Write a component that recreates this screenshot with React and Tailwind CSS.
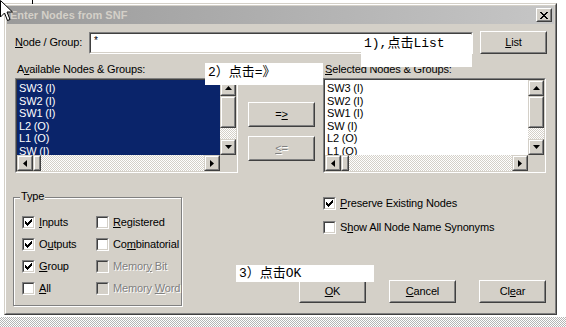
import React from "react";

const SO = "border border-t-[#808080] border-l-[#808080] border-b-white border-r-white";
const SI = "border border-t-[#404040] border-l-[#404040] border-b-[#d4d0c8] border-r-[#d4d0c8]";
const RO = "border border-t-white border-l-white border-b-[#404040] border-r-[#404040]";
const RI = "border border-t-[#d4d0c8] border-l-[#d4d0c8] border-b-[#808080] border-r-[#808080]";
const SBO = "border border-t-[#d4d0c8] border-l-[#d4d0c8] border-b-[#404040] border-r-[#404040]";
const SBI = "border border-t-white border-l-white border-b-[#808080] border-r-[#808080]";
const DITHER =
  "bg-[repeating-conic-gradient(#ffffff_0_25%,#d4d0c8_0_50%)] bg-[length:2px_2px]";
const DIS = "text-[#808080] [text-shadow:1px_1px_0_#ffffff]";

function U({ children }) {
  return <span className="underline underline-offset-[1px]">{children}</span>;
}

function Button({ className = "", children, disabled }) {
  return (
    <div className={`${RO} bg-[#d4d0c8] ${className}`}>
      <div className={`${RI} w-full h-full flex items-center justify-center ${disabled ? DIS : ""}`}>
        {children}
      </div>
    </div>
  );
}

function Tri({ dir }) {
  const pts = {
    up: "3.5,0 7,4 0,4",
    down: "0,0 7,0 3.5,4",
    left: "4,0 4,7 0,3.5",
    right: "0,0 4,3.5 0,7",
  }[dir];
  const v = dir === "up" || dir === "down";
  return (
    <svg width={v ? 7 : 4} height={v ? 4 : 7} viewBox={v ? "0 0 7 4" : "0 0 4 7"}>
      <polygon points={pts} fill="#000" />
    </svg>
  );
}

function SBtn({ dir, className = "" }) {
  return (
    <div className={`${SBO} bg-[#d4d0c8] w-[16px] h-[16px] shrink-0 ${className}`}>
      <div className={`${SBI} w-full h-full flex items-center justify-center`}>
        {dir ? <Tri dir={dir} /> : null}
      </div>
    </div>
  );
}

function VScroll() {
  return (
    <div className="w-[16px] flex flex-col shrink-0">
      <SBtn dir="up" />
      <div className={`${SBO} bg-[#d4d0c8] w-[16px] h-[32px]`}>
        <div className={`${SBI} w-full h-full`} />
      </div>
      <div className={`flex-1 ${DITHER}`} />
      <SBtn dir="down" />
    </div>
  );
}

function HScroll() {
  return (
    <div className="flex flex-1 h-[16px]">
      <SBtn dir="left" />
      <div className={`${SBO} bg-[#d4d0c8] w-[8px] h-[16px]`}>
        <div className={`${SBI} w-full h-full`} />
      </div>
      <div className={`flex-1 ${DITHER}`} />
      <SBtn dir="right" />
    </div>
  );
}

function ListBox({ items, selected }) {
  return (
    <div className={`${SO} w-[223px] h-[95px]`}>
      <div className={`${SI} w-full h-full flex flex-col`}>
        <div className="flex flex-1 min-h-0">
          <div
            className={`flex-1 overflow-hidden pl-[2px] pt-[2px] ${
              selected ? "bg-[#0a246a] text-white" : "bg-white text-black"
            }`}
          >
            {items.map((t) => (
              <div key={t} className="h-[12.5px] leading-[12.5px] whitespace-nowrap">
                {t}
              </div>
            ))}
          </div>
          <VScroll />
        </div>
        <div className="flex h-[16px]">
          <HScroll />
          <div className="w-[16px] bg-[#d4d0c8]" />
        </div>
      </div>
    </div>
  );
}

function Check({ on, disabled }) {
  const px = [
    [6, 0], [5, 1], [6, 1], [0, 2], [4, 2], [5, 2], [6, 2],
    [0, 3], [1, 3], [3, 3], [4, 3], [5, 3],
    [0, 4], [1, 4], [2, 4], [3, 4], [4, 4],
    [1, 5], [2, 5], [3, 5], [2, 6],
  ];
  return (
    <div className={`${SO} w-[13px] h-[13px] shrink-0`}>
      <div
        className={`${SI} w-full h-full flex items-center justify-center ${
          disabled ? "bg-[#d4d0c8]" : "bg-white"
        }`}
      >
        {on ? (
          <svg width="7" height="7" viewBox="0 0 7 7" shapeRendering="crispEdges">
            {px.map(([x, y]) => (
              <rect key={`${x}-${y}`} x={x} y={y} width="1" height="1" fill="#000" />
            ))}
          </svg>
        ) : null}
      </div>
    </div>
  );
}

function CheckRow({ on, disabled, children, className = "" }) {
  return (
    <div className={`flex items-center ${className}`}>
      <Check on={on} disabled={disabled} />
      <span className={`ml-[4px] whitespace-nowrap ${disabled ? DIS : ""}`}>{children}</span>
    </div>
  );
}

const AVAIL = ["SW3 (I)", "SW2 (I)", "SW1 (I)", "L2 (O)", "L1 (O)", "SW (I)"];
const SEL = ["SW3 (I)", "SW2 (I)", "SW1 (I)", "SW (I)", "L2 (O)", "L1 (O)"];

function Window() {
  return (
    <div
      className={`w-[553px] h-[312px] border border-t-[#d4d0c8] border-l-[#d4d0c8] border-b-[#404040] border-r-[#404040]`}
    >
      <div
        className={`w-full h-full border border-t-white border-l-white border-b-[#808080] border-r-[#808080] bg-[#d4d0c8] p-px flex flex-col`}
      >
        {/* title bar */}
        <div className="h-[18px] shrink-0 flex items-center justify-between bg-linear-to-r from-[#9a9a9a] to-[#c6c6c6] pl-[3px] pr-[2px]">
          <span className="font-bold text-[#d4d0c8] text-[11px] tracking-normal">Enter Nodes from SNF</span>
          <div className={`${RO} bg-[#d4d0c8] w-[16px] h-[14px]`}>
            <div className={`${RI} w-full h-full flex items-center justify-center`}>
              <svg width="8" height="7" viewBox="0 0 8 7" shapeRendering="crispEdges">
                <path d="M0 0h2v1h-2zM6 0h2v1h-2zM1 1h2v1h-2zM5 1h2v1h-2zM2 2h4v1h-4zM3 3h2v1h-2zM2 4h4v1h-4zM1 5h2v1h-2zM5 5h2v1h-2zM0 6h2v1h-2zM6 6h2v1h-2z" fill="#000" />
              </svg>
            </div>
          </div>
        </div>

        {/* client */}
        <div className="flex flex-col flex-1">
          {/* row 1 */}
          <div className="mt-[7px] h-[23px] flex items-center">
            <span className="pl-[8px] w-[82px] whitespace-nowrap">
              <U>N</U>ode / Group:
            </span>
            <div className={`${SO} w-[384px] h-[22px]`}>
              <div className={`${SI} w-full h-full bg-white pl-[3px] pt-[2px] text-[10px]`}>*</div>
            </div>
            <Button className="ml-[7px] w-[67px] h-[23px]">
              <span>
                <U>L</U>ist
              </span>
            </Button>
          </div>

          {/* labels */}
          <div className="mt-[9px] h-[13px] flex items-center">
            <span className="pl-[10px] w-[318px] whitespace-nowrap">
              A<U>v</U>ailable Nodes &amp; Groups:
            </span>
            <span className="whitespace-nowrap">
              <U>S</U>elected Nodes &amp; Groups:
            </span>
          </div>

          {/* lists */}
          <div className="mt-[2px] h-[95px] flex pl-[8px]">
            <ListBox items={AVAIL} selected />
            <div className="w-[85px] flex flex-col pl-[10px] pt-[24px]">
              <Button className="w-[67px] h-[25px]">
                <span>
                  =<U>&gt;</U>
                </span>
              </Button>
              <Button className="mt-[9px] w-[67px] h-[25px]" disabled>
                <span>
                  <U>&lt;</U>=
                </span>
              </Button>
            </div>
            <ListBox items={SEL} />
          </div>

          {/* bottom */}
          <div className="flex flex-1">
            <div className="ml-[6px] mt-[17px] relative w-[169px] h-[116px] pt-[7px]">
              <div className="w-full h-full border border-[#808080] shadow-[inset_1px_1px_0_#ffffff,1px_1px_0_#ffffff] pl-[8px] pt-[13px]">
                <div className="grid grid-cols-[74px_1fr] auto-rows-[22px]">
                  <CheckRow on>
                    <U>I</U>nputs
                  </CheckRow>
                  <CheckRow>
                    <U>R</U>egistered
                  </CheckRow>
                  <CheckRow on>
                    O<U>u</U>tputs
                  </CheckRow>
                  <CheckRow>
                    Co<U>m</U>binatorial
                  </CheckRow>
                  <CheckRow on>
                    <U>G</U>roup
                  </CheckRow>
                  <CheckRow disabled>
                    Memor<U>y</U> Bit
                  </CheckRow>
                  <CheckRow>
                    <U>A</U>ll
                  </CheckRow>
                  <CheckRow disabled>
                    Memory <U>W</U>ord
                  </CheckRow>
                </div>
              </div>
              <span className="absolute left-[7px] top-0 h-[13px] px-[1px] bg-[#d4d0c8] leading-[13px]">
                Type
              </span>
            </div>

            <div className="flex-1 flex flex-col">
              <div className="pl-[141px] pt-[22px] flex flex-col gap-[8px]">
                <CheckRow on className="h-[16px]">
                  <U>P</U>reserve Existing Nodes
                </CheckRow>
                <CheckRow className="h-[16px]">
                  S<U>h</U>ow All Node Name Synonyms
                </CheckRow>
              </div>
              <div className="mt-[45px] flex justify-end gap-[23px] pr-[8px]">
                <Button className="w-[67px] h-[23px]">
                  <span>
                    <U>O</U>K
                  </span>
                </Button>
                <Button className="w-[67px] h-[23px]">
                  <span>
                    <U>C</U>ancel
                  </span>
                </Button>
                <Button className="w-[67px] h-[23px]">
                  <span>
                    Cl<U>e</U>ar
                  </span>
                </Button>
              </div>
            </div>
          </div>
        </div>
      </div>
    </div>
  );
}

const ANN = "font-['Liberation_Mono','Noto_Sans_CJK_SC',monospace] text-[13px] text-black bg-white leading-none tracking-normal";

export default function App() {
  return (
    <div className="relative w-[566px] h-[327px] bg-white overflow-hidden font-['Liberation_Sans',Arial,sans-serif] text-[11px] tracking-[-0.15px] text-black leading-none">
      <div className="pt-[3px] pl-[4px]">
        <Window />
      </div>
      <div className="mt-[2px] h-[10px] bg-[repeating-conic-gradient(#b4b4b4_0_25%,#ffffff_0_50%)] bg-[length:2px_2px]" />

      {/* tick mark at top */}
      <div className="absolute left-[32px] top-0 w-px h-[4px] bg-black" />

      {/* annotations */}
      <div className={`absolute left-[361px] top-[35px] w-[111px] h-[32px] pl-[3px] pt-[2px] ${ANN}`}>
        1),点击List
      </div>
      <div className={`absolute left-[205px] top-[63px] w-[118px] h-[22px] pl-[3px] pt-[3px] ${ANN}`}>
        2）点击=》
      </div>
      <div className={`absolute left-[236px] top-[265px] w-[138px] h-[17px] pl-[3px] pt-[2px] ${ANN}`}>
        3）点击OK
      </div>

      {/* mouse cursor */}
      <svg className="absolute left-0 top-0" width="14" height="22" viewBox="0 0 14 22">
        <path d="M0.5 0.5 L0.5 17 L4.5 13 L7.5 20.5 L10 19.5 L7 12 L12.5 12 Z" fill="#fff" stroke="#000" strokeWidth="1" />
      </svg>
    </div>
  );
}
